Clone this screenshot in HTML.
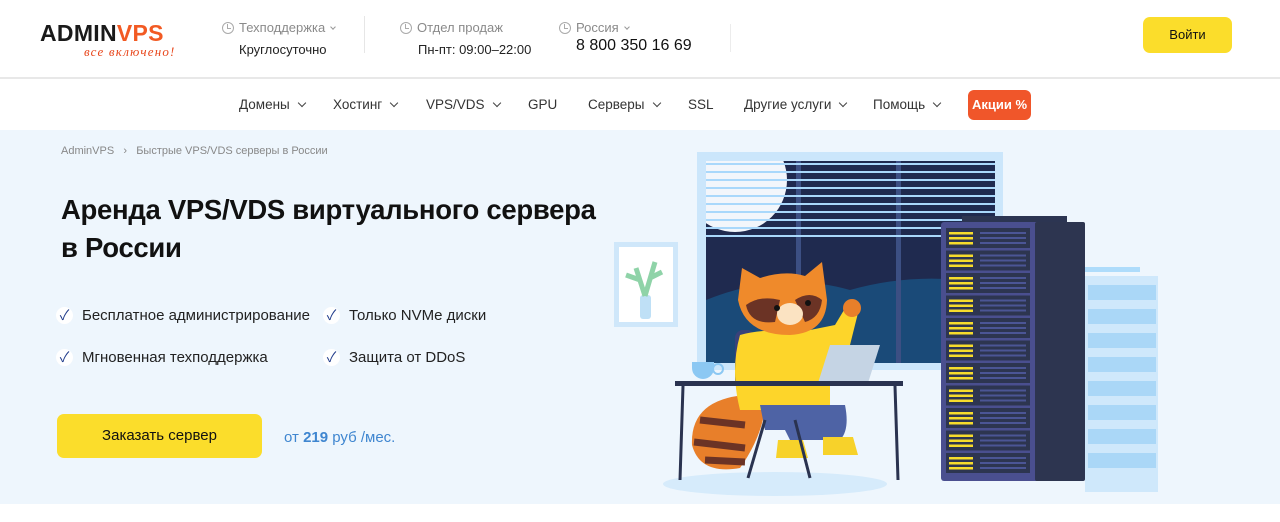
<!DOCTYPE html>
<html><head><meta charset="utf-8"><style>
*{margin:0;padding:0;box-sizing:border-box}
body{width:1280px;height:522px;overflow:hidden;background:#fff;font-family:"Liberation Sans","Noto Sans CJK SC",sans-serif;position:relative;color:#222}
.a{position:absolute;white-space:nowrap}
.g{color:#8a8a8a;font-size:13px}
.clk{display:inline-block;width:12px;height:12px;border:1px solid #aaa;border-radius:50%;vertical-align:-2px;margin-right:5px;position:relative}
.clk:after{content:"";position:absolute;left:4px;top:1px;width:3px;height:4px;border-left:1px solid #aaa;border-bottom:1px solid #aaa}
.nav{font-size:13.5px;color:#333;top:97px}
.ch{display:inline-block;width:6px;height:6px;border-right:1.5px solid #444;border-bottom:1.5px solid #444;transform:rotate(45deg);margin-left:9px;vertical-align:3px}
.chs{display:inline-block;width:4px;height:4px;border-right:1px solid #999;border-bottom:1px solid #999;transform:rotate(45deg);margin-left:6px;vertical-align:3px}
.chk{position:absolute;width:17px;height:17px;border-radius:50%;background:#fff;color:#1f3a8a;font-size:14px;text-align:center;line-height:17px}
.li{font-size:15px;color:#222}
</style></head><body>
<!-- header -->
<div class="a" style="left:40px;top:20px;font-size:23px;font-weight:bold;letter-spacing:0.3px;color:#1a1a1a">ADMIN<span style="color:#f25a23">VPS</span></div>
<div class="a" style="left:84px;top:44px;font-size:13px;font-style:italic;color:#e8461b;font-family:'Liberation Serif',serif;letter-spacing:1.2px">все включено!</div>
<div class="a g" style="left:222px;top:20px"><span class="clk"></span>Техподдержка<span class="chs"></span></div>
<div class="a" style="left:239px;top:42px;font-size:13px;color:#222">Круглосуточно</div>
<div class="a" style="left:364px;top:16px;width:1px;height:37px;background:#e6e6e6"></div>
<div class="a g" style="left:400px;top:20px"><span class="clk"></span>Отдел продаж</div>
<div class="a" style="left:418px;top:42px;font-size:13px;color:#222">Пн-пт: 09:00–22:00</div>
<div class="a g" style="left:559px;top:20px"><span class="clk"></span>Россия<span class="chs"></span></div>
<div class="a" style="left:576px;top:37px;font-size:16px;color:#111">8 800 350 16 69</div>
<div class="a" style="left:730px;top:24px;width:1px;height:28px;background:#ececec"></div>
<div class="a" style="left:1143px;top:17px;width:89px;height:36px;background:#fbdd2b;border-radius:7px;font-size:13px;text-align:center;line-height:36px;color:#111">Войти</div>
<div class="a" style="left:0;top:77px;width:1280px;height:2px;background:#e8e8e8"></div>
<!-- nav -->
<div class="a nav" style="left:239px">Домены<span class="ch"></span></div>
<div class="a nav" style="left:333px">Хостинг<span class="ch"></span></div>
<div class="a nav" style="left:426px">VPS/VDS<span class="ch"></span></div>
<div class="a nav" style="left:528px">GPU</div>
<div class="a nav" style="left:588px">Серверы<span class="ch"></span></div>
<div class="a nav" style="left:688px">SSL</div>
<div class="a nav" style="left:744px">Другие услуги<span class="ch"></span></div>
<div class="a nav" style="left:873px">Помощь<span class="ch"></span></div>
<div class="a" style="left:968px;top:90px;width:63px;height:30px;background:#f0562a;border-radius:6px;color:#fff;font-size:13px;font-weight:bold;text-align:center;line-height:30px">Акции %</div>
<!-- hero -->
<div class="a" style="left:0;top:130px;width:1280px;height:374px;background:#eef6fd"></div>
<div class="a" style="left:61px;top:145px;font-size:11px;color:#888">AdminVPS &nbsp;&nbsp;›&nbsp;&nbsp; Быстрые VPS/VDS серверы в России</div>
<div class="a" style="left:61px;top:191px;font-size:27.5px;font-weight:bold;line-height:38px;color:#111;letter-spacing:-0.3px">Аренда VPS/VDS виртуального сервера<br>в России</div>
<div class="chk" style="left:56px;top:307px">✓</div><div class="a li" style="left:82px;top:307px">Бесплатное администрирование</div>
<div class="chk" style="left:323px;top:307px">✓</div><div class="a li" style="left:349px;top:307px">Только NVMe диски</div>
<div class="chk" style="left:56px;top:349px">✓</div><div class="a li" style="left:82px;top:349px">Мгновенная техподдержка</div>
<div class="chk" style="left:323px;top:349px">✓</div><div class="a li" style="left:349px;top:349px">Защита от DDoS</div>
<div class="a" style="left:57px;top:414px;width:205px;height:44px;background:#fbdd2b;border-radius:7px;font-size:15px;text-align:center;line-height:44px;color:#111">Заказать сервер</div>
<div class="a" style="left:284px;top:429px;font-size:15px;color:#3f86d0">от <b>219</b> руб /мес.</div>
<!-- illustration -->
<svg class="a" style="left:0;top:0" width="1280" height="522">
<defs><clipPath id="w"><rect x="706" y="161" width="289" height="202"/></clipPath></defs>
<ellipse cx="775" cy="484" rx="112" ry="12" fill="#d6ebfb"/>
<rect x="614" y="242" width="64" height="85" fill="#cfe7fa"/><rect x="619" y="247" width="54" height="75" fill="#fff"/>
<rect x="640" y="295" width="11" height="24" rx="3" fill="#bfe0f6"/>
<path d="M645 296 L636 268 M645 296 L655 262 M640 280 L626 275 M650 278 L662 272" stroke="#8fd3a8" stroke-width="5" fill="none"/>
<rect x="697" y="152" width="306" height="218" fill="#cbe6fb"/>
<rect x="706" y="161" width="289" height="202" fill="#1f2a4f"/>
<g clip-path="url(#w)">
<path d="M706 300 Q780 270 850 290 Q920 270 995 285 L995 363 L706 363Z" fill="#1a4a78"/>
<circle cx="735" cy="180" r="52" fill="#f2f6fb"/>
</g>
<rect x="796" y="161" width="5" height="202" fill="#3c4f83"/><rect x="896" y="161" width="5" height="202" fill="#3c4f83"/>
<g fill="#a9d8fb"><rect x="706" y="163" width="289" height="2"/><rect x="706" y="171" width="289" height="2"/><rect x="706" y="179" width="289" height="2"/><rect x="706" y="187" width="289" height="2"/><rect x="706" y="195" width="289" height="2"/><rect x="706" y="203" width="289" height="2"/><rect x="706" y="211" width="289" height="2"/><rect x="706" y="219" width="289" height="2"/><rect x="706" y="227" width="289" height="2"/><rect x="706" y="235" width="289" height="2"/></g>
<rect x="1085" y="267" width="55" height="5" fill="#aedcfb"/>
<rect x="1085" y="276" width="73" height="216" fill="#cfe8fb"/>
<g fill="#aad7f7"><rect x="1088" y="285" width="68" height="15"/><rect x="1088" y="309" width="68" height="15"/><rect x="1088" y="333" width="68" height="15"/><rect x="1088" y="357" width="68" height="15"/><rect x="1088" y="381" width="68" height="15"/><rect x="1088" y="405" width="68" height="15"/><rect x="1088" y="429" width="68" height="15"/><rect x="1088" y="453" width="68" height="15"/></g>
<rect x="962" y="216" width="105" height="6" fill="#2c3552"/>
<rect x="941" y="222" width="144" height="259" rx="3" fill="#4a4f8f"/>
<rect x="1035" y="222" width="50" height="259" rx="2" fill="#2d3550"/>
<g id="u"><rect x="946" y="228" width="84" height="20" fill="#2d3550"/><g fill="#f6dc2c"><rect x="949" y="232" width="24" height="2.5"/><rect x="949" y="237" width="24" height="2.5"/><rect x="949" y="242" width="24" height="2.5"/></g><g fill="#4b5595"><rect x="980" y="232" width="46" height="2"/><rect x="980" y="237" width="46" height="2"/><rect x="980" y="242" width="46" height="2"/></g></g>
<use href="#u" y="22.5"/><use href="#u" y="45"/><use href="#u" y="67.5"/><use href="#u" y="90"/><use href="#u" y="112.5"/><use href="#u" y="135"/><use href="#u" y="157.5"/><use href="#u" y="180"/><use href="#u" y="202.5"/><use href="#u" y="225"/>
<path d="M692 362 h22 v6 a11 11 0 0 1 -22 0Z" fill="#8cc8f3"/><circle cx="718" cy="369" r="5" fill="none" stroke="#8cc8f3" stroke-width="2"/>
<path d="M745 395 Q690 400 692 445 Q700 475 740 468 Q760 440 765 410Z" fill="#e87f2a"/>
<path d="M700 420 L745 425 M694 442 L745 448 M705 460 L745 462" stroke="#6b3325" stroke-width="7"/>
<rect x="735" y="330" width="20" height="60" rx="8" fill="#39427a"/>
<path d="M740 335 Q765 328 800 332 L835 325 L850 300 L860 305 L850 345 L830 350 L830 410 L740 410 Q730 370 740 335Z" fill="#fdd52a"/>
<path d="M760 405 L845 405 Q850 430 840 440 L790 440 L785 430 L765 430Z" fill="#4e63a5"/>
<path d="M778 440 h25 l5 18 h-32Z" fill="#f7d22a"/><path d="M823 437 h30 l5 18 h-35Z" fill="#f7d22a"/>
<circle cx="852" cy="308" r="9" fill="#e87f2a"/>
<path d="M738 300 L742 268 L760 278 Q785 270 805 276 L822 262 L827 300 Q826 333 790 335 Q745 335 738 300Z" fill="#ef8a2b"/>
<path d="M746 305 Q760 295 780 300 L775 322 Q750 325 746 305Z" fill="#6b3325"/><path d="M795 300 Q810 290 822 300 Q820 318 805 322Z" fill="#6b3325"/>
<ellipse cx="790" cy="314" rx="13" ry="11" fill="#fbe3c2"/>
<circle cx="777" cy="308" r="3" fill="#111"/><circle cx="808" cy="303" r="3" fill="#111"/>
<path d="M830 345 L880 345 L868 383 L818 383Z" fill="#c5d4e4"/>
<rect x="675" y="381" width="228" height="5" fill="#2a3350"/>
<path d="M683 386 L680 480 M895 386 L898 480 M765 420 L748 478 M795 420 L810 478" stroke="#2a3350" stroke-width="3"/>
</svg>
</body></html>
